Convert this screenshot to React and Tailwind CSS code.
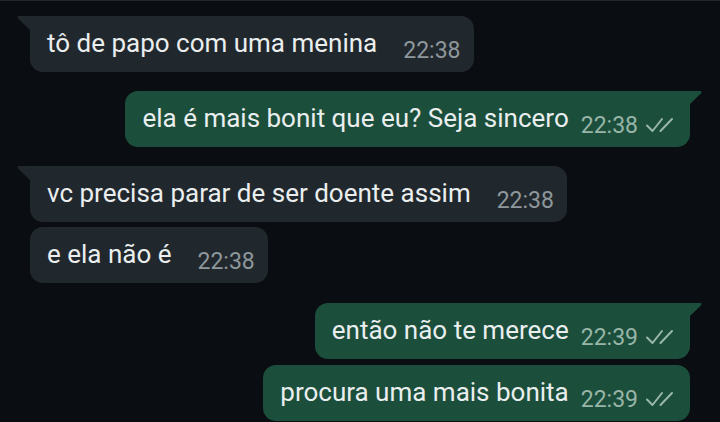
import React from "react";

const msgs = [
  { out: false, text: "tô de papo com uma menina", time: "22:38", tail: true, mt: "mt-[15px]" },
  { out: true, text: "ela é mais bonit que eu? Seja sincero", time: "22:38", tail: true, mt: "mt-[19px]" },
  { out: false, text: "vc precisa parar de ser doente assim", time: "22:38", tail: true, mt: "mt-[19px]" },
  { out: false, text: "e ela não é", time: "22:38", tail: false, mt: "mt-[5px]" },
  { out: true, text: "então não te merece", time: "22:39", tail: true, mt: "mt-[20px]" },
  { out: true, text: "procura uma mais bonita", time: "22:39", tail: false, mt: "mt-[6px]" },
];

function Ticks() {
  return (
    <svg width="31" height="16" viewBox="0 0 31 16" fill="none" className="ml-[7px] mt-[14px] shrink-0">
      <path d="M2 8.5 L7.5 14 L17 2" stroke="#9ab8aa" strokeWidth="2" strokeLinecap="round" strokeLinejoin="round" />
      <path d="M15.5 14 L27 2" stroke="#9ab8aa" strokeWidth="2" strokeLinecap="round" />
    </svg>
  );
}

function Bubble({ m }) {
  const base = m.out
    ? "self-end mr-[30px] bg-[#1b4e3b] pl-[17px] pr-[14px]"
    : "self-start ml-[30px] bg-[#21282d] pl-[17px] pr-[13px]";
  const corner = m.tail ? (m.out ? "rounded-[13px] rounded-tr-none" : "rounded-[13px] rounded-tl-none") : "rounded-[13px]";
  return (
    <div className={`relative flex items-start pt-[12px] pb-[7px] ${base} ${corner} ${m.mt}`}>
      {m.tail && !m.out && (
        <svg width="14" height="16" viewBox="0 0 14 16" className="absolute left-[-13px] top-0">
          <path d="M1.5 0 L14 0 L14 15 L0.6 2 Q0 0 1.5 0 Z" fill="#21282d" />
        </svg>
      )}
      {m.tail && m.out && (
        <svg width="14" height="16" viewBox="0 0 14 16" className="absolute right-[-12px] top-0">
          <path d="M12.5 0 L0 0 L0 15 L13.4 2 Q14 0 12.5 0 Z" fill="#1b4e3b" />
        </svg>
      )}
      <span className="text-[26px] leading-[30px] text-[#eaeeef] whitespace-nowrap">{m.text}</span>
      <span
        className={`text-[23px] leading-[28px] mt-[9px] whitespace-nowrap ${m.out ? "ml-[12px] text-[#98b5a8]" : "ml-[26px] text-[#8e979c]"}`}
      >
        {m.time}
      </span>
      {m.out && <Ticks />}
    </div>
  );
}

export default function App() {
  return (
    <div
      className="w-[720px] h-[422px] overflow-hidden bg-[#0a0d11] border-t border-[#23272c] flex flex-col"
      style={{ fontFamily: "Roboto, 'Noto Sans', sans-serif" }}
    >
      {msgs.map((m, i) => (
        <Bubble key={i} m={m} />
      ))}
    </div>
  );
}
